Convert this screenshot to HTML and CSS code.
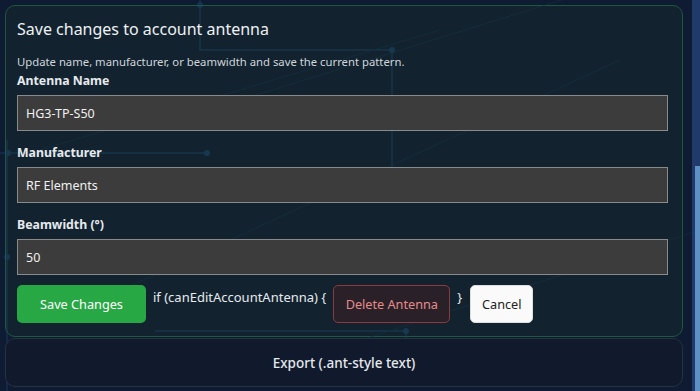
FILE: index.html
```html
<!DOCTYPE html>
<html lang="en">
<head>
    <meta charset="UTF-8">
    <meta name="viewport" content="width=device-width, initial-scale=1.0">
    <title>Edit Antenna</title>
    <link rel="stylesheet" href="styles.css">
</head>
<body>
    <svg class="circuit" width="700" height="391" viewBox="0 0 700 391">
        <g stroke="#1b4566" stroke-width="1.5" fill="none">
            <path d="M200 0 V50 H392 V175"/>
            <path d="M0 153 H207"/>
            <path d="M7 140 V391"/>
            <path d="M155 331 H406 V375 H576"/>
        </g>
        <g stroke="#173447" stroke-width="1" fill="none">
            <path d="M40 150 L440 30"/>
            <path d="M240 100 L690 -40"/>
            <path d="M100 300 L620 60"/>
            <path d="M300 360 L700 230"/>
        </g>
        <g fill="#1d4d70">
            <circle cx="200" cy="5" r="3"/>
            <circle cx="392" cy="50" r="3"/>
            <circle cx="8" cy="153" r="3"/>
            <circle cx="207" cy="153" r="3"/>
            <circle cx="7" cy="257" r="3"/>
            <circle cx="406" cy="331" r="3"/>
            <circle cx="406" cy="375" r="3"/>
            <circle cx="576" cy="375" r="3"/>
        </g>
    </svg>

    <div class="page">
        <div class="content">
            <div class="card">
                <h2>Save changes to account antenna</h2>
                <p class="hint">Update name, manufacturer, or beamwidth and save the current pattern.</p>

                <div class="row">
                    <label for="antName">Antenna Name</label>
                    <input type="text" id="antName" value="HG3-TP-S50">
                </div>

                <div class="row">
                    <label for="antMaker">Manufacturer</label>
                    <input type="text" id="antMaker" value="RF Elements">
                </div>

                <div class="row">
                    <label for="antBeam">Beamwidth (°)</label>
                    <input type="text" id="antBeam" value="50">
                </div>

                <div class="actions">
                    <button class="btn btn-save">Save Changes</button>
                    <span class="code">if (canEditAccountAntenna) {</span>
                    <button class="btn btn-delete">Delete Antenna</button>
                    <span class="code">}</span>
                    <button class="btn btn-cancel">Cancel</button>
                </div>
            </div>

            <div class="card card-export">
                Export (.ant-style text)
            </div>
        </div>
        <div class="scrollbar"><div class="thumb"></div></div>
    </div>
</body>
</html>
```

FILE: styles.css
```css
html, body {
    margin: 0;
    height: 100%;
    overflow: hidden;
}
body {
    font-family: "Noto Sans", "Open Sans", sans-serif;
    background-color: #0f1a33;
    color: #e6e9ee;
    position: relative;
}
.circuit {
    position: absolute;
    top: 0;
    left: 0;
    z-index: 1;
    pointer-events: none;
    opacity: 0.5;
}
.page {
    display: flex;
    height: 100%;
}
.content {
    flex: 1;
    padding: 5px 9px 0 5px;
    display: flex;
    flex-direction: column;
    gap: 1px;
}
.card {
    background: #12232f;
    border: 1px solid #1d5a3a;
    border-radius: 10px;
    padding: 10px 14px 13px 11px;
}
.card h2 {
    margin: 0;
    font-size: 16px;
    font-weight: normal;
    line-height: 26px;
    color: #eef1f4;
    position: relative;
    z-index: 2;
}
.hint {
    margin: 11px 0 0;
    font-size: 11.3px;
    line-height: 18px;
    color: #d0d5dc;
    position: relative;
    z-index: 2;
}
.row {
    margin-top: 1px;
    position: relative;
    z-index: 2;
}
.row label {
    display: block;
    font-size: 12.3px;
    font-weight: bold;
    line-height: 18px;
    color: #e6e9ee;
}
.row + .row {
    margin-top: 13px;
}
.row input {
    width: 100%;
    height: 36px;
    margin-top: 5px;
    padding: 0 8px;
    box-sizing: border-box;
    background: #3c3c3c;
    border: 1px solid #8a8a8a;
    border-radius: 0;
    color: #f0f0f0;
    font-family: inherit;
    font-size: 12.5px;
}
.actions {
    display: flex;
    align-items: flex-start;
    gap: 7px;
    margin-top: 10px;
    position: relative;
    z-index: 2;
}
.btn {
    height: 38px;
    border-radius: 5px;
    font-family: inherit;
    font-size: 12.7px;
    padding: 0 10px;
}
.btn-save {
    width: 129px;
    background: #28a745;
    border: none;
    color: #ffffff;
}
.btn-delete {
    width: 117px;
    background: #2a2128;
    border: 1px solid #8c3a40;
    color: #e58b8b;
}
.btn-cancel {
    width: 63px;
    margin-left: 1px;
    background: #fafafa;
    border: 1px solid #dddddd;
    color: #222;
}
.code {
    font-size: 13px;
    line-height: 18px;
    padding-top: 3px;
    color: #e6e9ee;
}
.card-export {
    background: #101a2c;
    border-color: #263142;
    height: 47px;
    padding: 0;
    display: flex;
    align-items: center;
    justify-content: center;
    font-size: 13.5px;
    font-weight: 500;
    position: relative;
    z-index: 2;
}
.scrollbar {
    width: 8px;
    background: #1f3a6b;
    display: flex;
    flex-direction: column;
    justify-content: flex-end;
    position: relative;
    z-index: 2;
}
.thumb {
    height: 225px;
    margin-left: 3px;
    background: #5e90c4;
}
```
